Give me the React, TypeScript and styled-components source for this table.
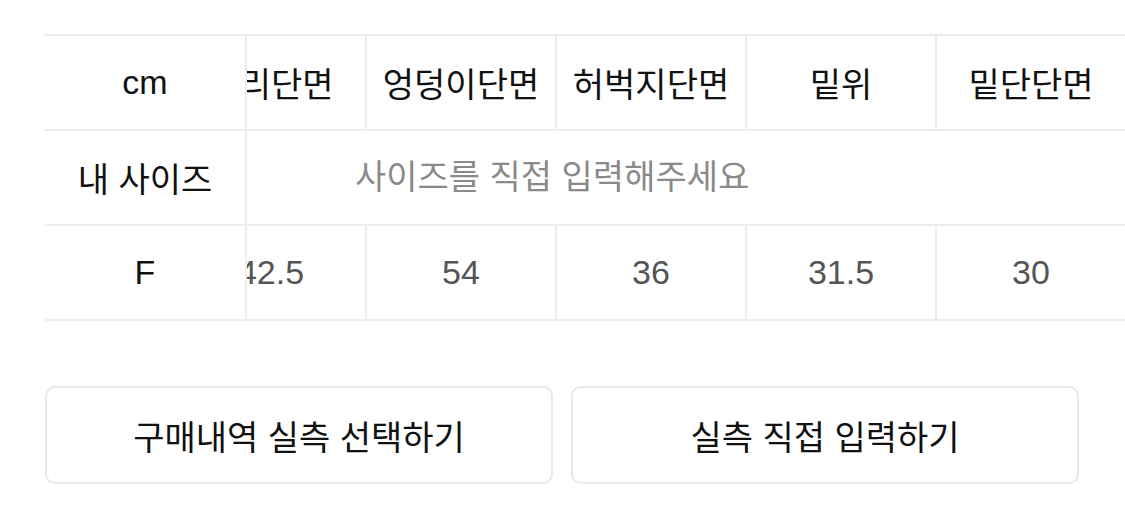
import React, { useLayoutEffect, useRef } from "react";
import styled, { createGlobalStyle } from "styled-components";

const Global = createGlobalStyle`
  html, body { margin: 0; padding: 0; background: #fff; }
  body { font-family: "Liberation Sans", "Noto Sans CJK KR", sans-serif; }
  * { box-sizing: border-box; }
`;

const Page = styled.div`
  padding: 34px 0 0 45px;
  width: 1125px;
`;

const Scroller = styled.div`
  overflow-x: auto;
  scrollbar-width: none;
  &::-webkit-scrollbar { display: none; }
  border-top: 2px solid #ececec;
`;

const Grid = styled.div`
  display: grid;
  grid-template-columns: 202px repeat(5, 190px);
  grid-auto-rows: 95px;
  width: max-content;
`;

const Cell = styled.div<{ $muted?: boolean }>`
  display: flex;
  align-items: center;
  justify-content: center;
  border-bottom: 2px solid #ececec;
  border-left: 2px solid #ececec;
  font-size: 34px;
  color: ${(p) => (p.$muted ? "#555" : "#111")};
  white-space: nowrap;
  overflow: hidden;
`;

const StickyCell = styled.div`
  position: sticky;
  left: 0;
  z-index: 1;
  background: #fff;
  display: flex;
  align-items: center;
  justify-content: center;
  border-bottom: 2px solid #ececec;
  border-right: 2px solid #ececec;
  font-size: 34px;
  color: #111;
`;

const InputCell = styled.div`
  grid-column: span 5;
  display: flex;
  align-items: center;
  border-bottom: 2px solid #ececec;
`;

const SizeInput = styled.input`
  border: none;
  outline: none;
  background: transparent;
  width: 100%;
  height: 100%;
  padding: 0 0 0 180px;
  font-family: "Liberation Sans", "Noto Sans CJK KR", sans-serif;
  font-size: 34px;
  color: #333;
  &::placeholder { color: #8a8a8a; }
`;

const Buttons = styled.div`
  display: grid;
  grid-template-columns: 1fr 1fr;
  gap: 18px;
  margin-top: 65px;
  padding-right: 46px;
`;

const Button = styled.button`
  height: 98px;
  border: 2px solid #e8e8e8;
  border-radius: 10px;
  background: #fff;
  font-family: "Liberation Sans", "Noto Sans CJK KR", sans-serif;
  font-size: 34px;
  color: #111;
  cursor: pointer;
`;

const headers = ["허리단면", "엉덩이단면", "허벅지단면", "밑위", "밑단단면"];
const values = ["42.5", "54", "36", "31.5", "30"];

export default function App() {
  const ref = useRef<HTMLDivElement>(null);
  useLayoutEffect(() => {
    if (ref.current) ref.current.scrollLeft = ref.current.scrollWidth;
  }, []);
  return (
    <>
      <Global />
      <Page>
        <Scroller ref={ref}>
          <Grid>
            <StickyCell>cm</StickyCell>
            {headers.map((h) => (
              <Cell key={h}>{h}</Cell>
            ))}
            <StickyCell>내 사이즈</StickyCell>
            <InputCell>
              <SizeInput placeholder="사이즈를 직접 입력해주세요" />
            </InputCell>
            <StickyCell>F</StickyCell>
            {values.map((v, i) => (
              <Cell key={i} $muted>
                {v}
              </Cell>
            ))}
          </Grid>
        </Scroller>
        <Buttons>
          <Button>구매내역 실측 선택하기</Button>
          <Button>실측 직접 입력하기</Button>
        </Buttons>
      </Page>
    </>
  );
}
